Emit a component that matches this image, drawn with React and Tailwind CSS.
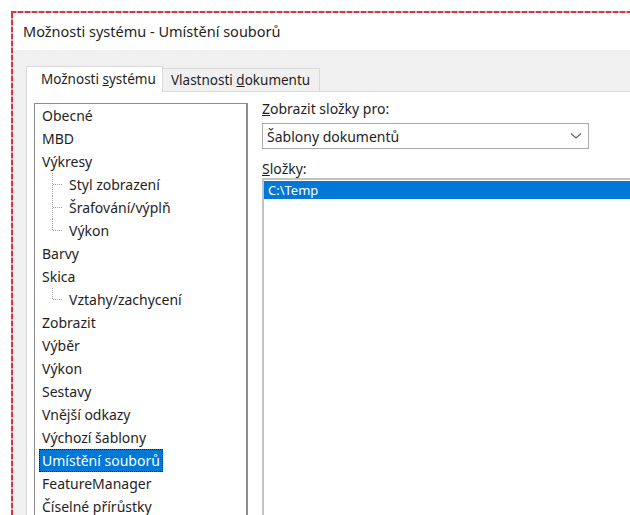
import React from 'react';

const font = { fontFamily: '"Noto Sans", "Open Sans", sans-serif' };

const treeItems = [
  { label: 'Obecné' },
  { label: 'MBD' },
  { label: 'Výkresy' },
  { label: 'Styl zobrazení', child: true },
  { label: 'Šrafování/výplň', child: true },
  { label: 'Výkon', child: true, last: true },
  { label: 'Barvy' },
  { label: 'Skica' },
  { label: 'Vztahy/zachycení', child: true, last: true },
  { label: 'Zobrazit' },
  { label: 'Výběr' },
  { label: 'Výkon' },
  { label: 'Sestavy' },
  { label: 'Vnější odkazy' },
  { label: 'Výchozí šablony' },
  { label: 'Umístění souborů', selected: true },
  { label: 'FeatureManager' },
  { label: 'Číselné přírůstky' },
];

// dotted connector drawn in front of child nodes
const Branch = ({ last }) => (
  <svg width="14" height="23" className="shrink-0">
    <line x1="0.5" y1="0" x2="0.5" y2={last ? 12 : 23} stroke="#a0a0a0" strokeDasharray="1 1" />
    <line x1="1" y1="11.5" x2="11" y2="11.5" stroke="#a0a0a0" strokeDasharray="1 1" />
  </svg>
);

const TreeRow = ({ item }) => (
  <div className={`flex items-center h-[23px] ${item.child ? 'pl-[17px]' : 'pl-[4px]'}`}>
    {item.child && <Branch last={item.last} />}
    <span
      className={`px-[3px] leading-[23px] whitespace-nowrap ${
        item.selected
          ? 'bg-[#0078d7] text-white outline outline-1 outline-dotted outline-[#1b1b1b] -outline-offset-1'
          : 'text-[#1e1e1e]'
      }`}
    >
      {item.label}
    </span>
  </div>
);

export default function App() {
  return (
    <div className="w-[630px] h-[515px] overflow-hidden bg-white pl-[11px] pt-[11px] text-[14px]" style={font}>
      <div className="w-[700px] h-[600px] flex flex-col">
        {/* red dashed selection frame */}
        <div className="h-[2px] shrink-0 bg-[repeating-linear-gradient(90deg,#e3303e_0_5px,#b8b8b8_5px_7px)]" />
        <div className="flex-1 flex">
          <div className="w-[2px] shrink-0 bg-[repeating-linear-gradient(180deg,#e3303e_0_5px,#b8b8b8_5px_7px)]" />
          <div className="flex-1 flex flex-col">
            <div className="h-[37px] pl-[10px] flex items-center text-[14.5px] text-[#1e1e1e]">
              Možnosti systému - Umístění souborů
            </div>
            <div className="flex-1 bg-[#f0f0f0] pl-[13px] pt-[15px] flex flex-col">
              {/* tab strip */}
              <div className="flex items-end h-[26px]">
                <div className="relative z-10 h-[26px] -mb-px w-[137px] bg-white border border-b-0 border-[#d9d9d9] flex items-center pl-[14px] text-[13.5px] text-[#1e1e1e]">
                  <span>
                    Možnosti <span className="underline">s</span>ystému
                  </span>
                </div>
                <div className="h-[23px] w-[157px] bg-[#f0f0f0] border-t border-r border-[#d9d9d9] flex items-center pl-[8px] text-[13.5px] text-[#1e1e1e]">
                  <span>
                    Vlastnosti <span className="underline">d</span>okumentu
                  </span>
                </div>
              </div>

              {/* tab page */}
              <div className="flex-1 bg-white border border-[#d9d9d9] pl-[7px] pt-[11px] flex gap-[14px]">
                <div className="w-[214px] h-[440px] border border-r-2 border-[#8c8c8c]">
                  {treeItems.map((item, i) => (
                    <TreeRow key={i} item={item} />
                  ))}
                </div>

                <div className="flex-1 flex flex-col text-[#1e1e1e]">
                  <div className="h-[20px] -mt-[4px] leading-[20px]">
                    <span className="underline">Z</span>obrazit složky pro:
                  </div>
                  <div className="mt-[4px] w-[327px] h-[26px] border border-[#a9a9a9] flex items-center justify-between pl-[4px] pr-[6px]">
                    <span>Šablony dokumentů</span>
                    <svg width="12" height="8" viewBox="0 0 12 8">
                      <path d="M1 1.5 L6 6 L11 1.5" fill="none" stroke="#606060" strokeWidth="1.2" />
                    </svg>
                  </div>
                  <div className="mt-[11px] h-[18px] leading-[18px]">
                    <span className="underline">S</span>ložky:
                  </div>
                  <div className="flex-1 border-t-2 border-l-2 border-[#c3c3c3] pt-[1px]">
                    <div className="h-[18px] bg-[#0078d7] text-white pl-[4px] leading-[18px] text-[13px]">
                      C:\Temp
                    </div>
                  </div>
                </div>
              </div>
            </div>
          </div>
        </div>
      </div>
    </div>
  );
}
